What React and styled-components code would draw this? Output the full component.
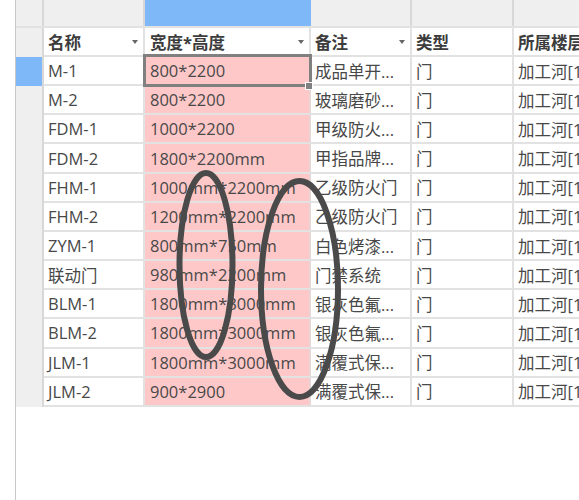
import React from 'react';
import styled, { createGlobalStyle } from 'styled-components';

const GlobalStyle = createGlobalStyle`
  html, body {
    margin: 0;
    padding: 0;
    background: #fff;
    overflow: hidden;
  }
`;

const columns = '28px 101px 166px 101px 102px 120px';

const Page = styled.div`
  position: relative;
  width: 579px;
  height: 500px;
  overflow: hidden;
  padding-left: 15px;
  box-sizing: border-box;
  font-family: "Open Sans", "Noto Sans CJK SC", sans-serif;
  font-size: 16.5px;
  color: #484848;
`;

const Sheet = styled.div`
  width: 564px;
  height: 500px;
  border-left: 1px solid #c8c8c8;
  box-sizing: border-box;
`;

const Row = styled.div`
  display: grid;
  grid-template-columns: ${columns};
  height: ${(p) => p.$height}px;
  box-sizing: border-box;
  border-bottom: 2px solid #e2e2e2;
`;

const BandCell = styled.div`
  background: ${(p) => (p.$active ? '#7eb8f8' : '#efefef')};
  border-right: 2px solid ${(p) => (p.$active ? '#7eb8f8' : '#d8d8d8')};
  box-sizing: border-box;
`;

const RowHead = styled.div`
  background: ${(p) => (p.$active ? '#7eb8f8' : '#efefef')};
  border-right: 2px solid #d8d8d8;
  box-sizing: border-box;
  margin-bottom: -2px;
`;

const HeadCell = styled.div`
  display: flex;
  align-items: center;
  justify-content: space-between;
  padding: 0 5px 0 ${(p) => (p.$size ? 5 : 4)}px;
  border-right: 2px solid #e2e2e2;
  box-sizing: border-box;
  font-weight: 700;
  font-size: 16.5px;
  color: #3c3c3c;
  white-space: nowrap;
  overflow: hidden;
`;

const Arrow = styled.span`
  width: 0;
  height: 0;
  flex: none;
  border-left: 3px solid transparent;
  border-right: 3px solid transparent;
  border-top: 4px solid #666;
`;

const Cell = styled.div`
  position: relative;
  z-index: ${(p) => (p.$selected ? 1 : 'auto')};
  display: flex;
  align-items: center;
  padding-left: ${(p) => (p.$pink ? 5 : 4)}px;
  box-sizing: border-box;
  border-right: 2px solid ${(p) => (p.$pink ? '#e6d6d6' : '#e2e2e2')};
  background: ${(p) => (p.$pink ? '#ffc8c8' : '#fff')};
  white-space: nowrap;
  overflow: ${(p) => (p.$selected ? 'visible' : 'hidden')};
`;

const Selection = styled.div`
  position: absolute;
  inset: -3px -3px -3px -2px;
  border: 3.5px solid #808080;
  pointer-events: none;
`;

const Handle = styled.div`
  position: absolute;
  right: -4px;
  bottom: -6px;
  width: 6px;
  height: 6px;
  background: #808080;
  border: 1px solid #fff;
`;

const Marks = styled.svg`
  position: absolute;
  z-index: 2;
  left: 0;
  top: 0;
  pointer-events: none;
`;

const rows = [
  ['M-1', '800*2200', '成品单开...'],
  ['M-2', '800*2200', '玻璃磨砂...'],
  ['FDM-1', '1000*2200', '甲级防火...'],
  ['FDM-2', '1800*2200mm', '甲指品牌...'],
  ['FHM-1', '1000mm*2200mm', '乙级防火门'],
  ['FHM-2', '1200mm*2200mm', '乙级防火门'],
  ['ZYM-1', '800mm*750mm', '白色烤漆...'],
  ['联动门', '980mm*2200mm', '门禁系统'],
  ['BLM-1', '1800mm*3000mm', '银灰色氟...'],
  ['BLM-2', '1800mm*3000mm', '银灰色氟...'],
  ['JLM-1', '1800mm*3000mm', '满覆式保...'],
  ['JLM-2', '900*2900', '满覆式保...'],
];

const App = () => (
  <Page>
    <GlobalStyle />
    <Sheet>
      <Row $height={28}>
        <BandCell />
        <BandCell />
        <BandCell $active />
        <BandCell />
        <BandCell />
        <BandCell />
      </Row>
      <Row $height={29}>
        <RowHead />
        <HeadCell>名称<Arrow /></HeadCell>
        <HeadCell $size>宽度*高度<Arrow /></HeadCell>
        <HeadCell>备注<Arrow /></HeadCell>
        <HeadCell>类型</HeadCell>
        <HeadCell>所属楼层</HeadCell>
      </Row>
      {rows.map(([name, size, note], i) => (
        <Row $height={29.17} key={name}>
          <RowHead $active={i === 0} />
          <Cell>{name}</Cell>
          <Cell $pink $selected={i === 0}>
            {size}
            {i === 0 && (
              <Selection>
                <Handle />
              </Selection>
            )}
          </Cell>
          <Cell>{note}</Cell>
          <Cell>门</Cell>
          <Cell>加工河[1]</Cell>
        </Row>
      ))}
    </Sheet>
    <Marks width="579" height="500" viewBox="0 0 579 500">
      <ellipse cx="206" cy="265" rx="26.5" ry="92" fill="none" stroke="#4a4a4a" strokeWidth="6" />
      <ellipse cx="299.5" cy="289" rx="38.5" ry="108" fill="none" stroke="#4a4a4a" strokeWidth="6" />
    </Marks>
  </Page>
);

export default App;
